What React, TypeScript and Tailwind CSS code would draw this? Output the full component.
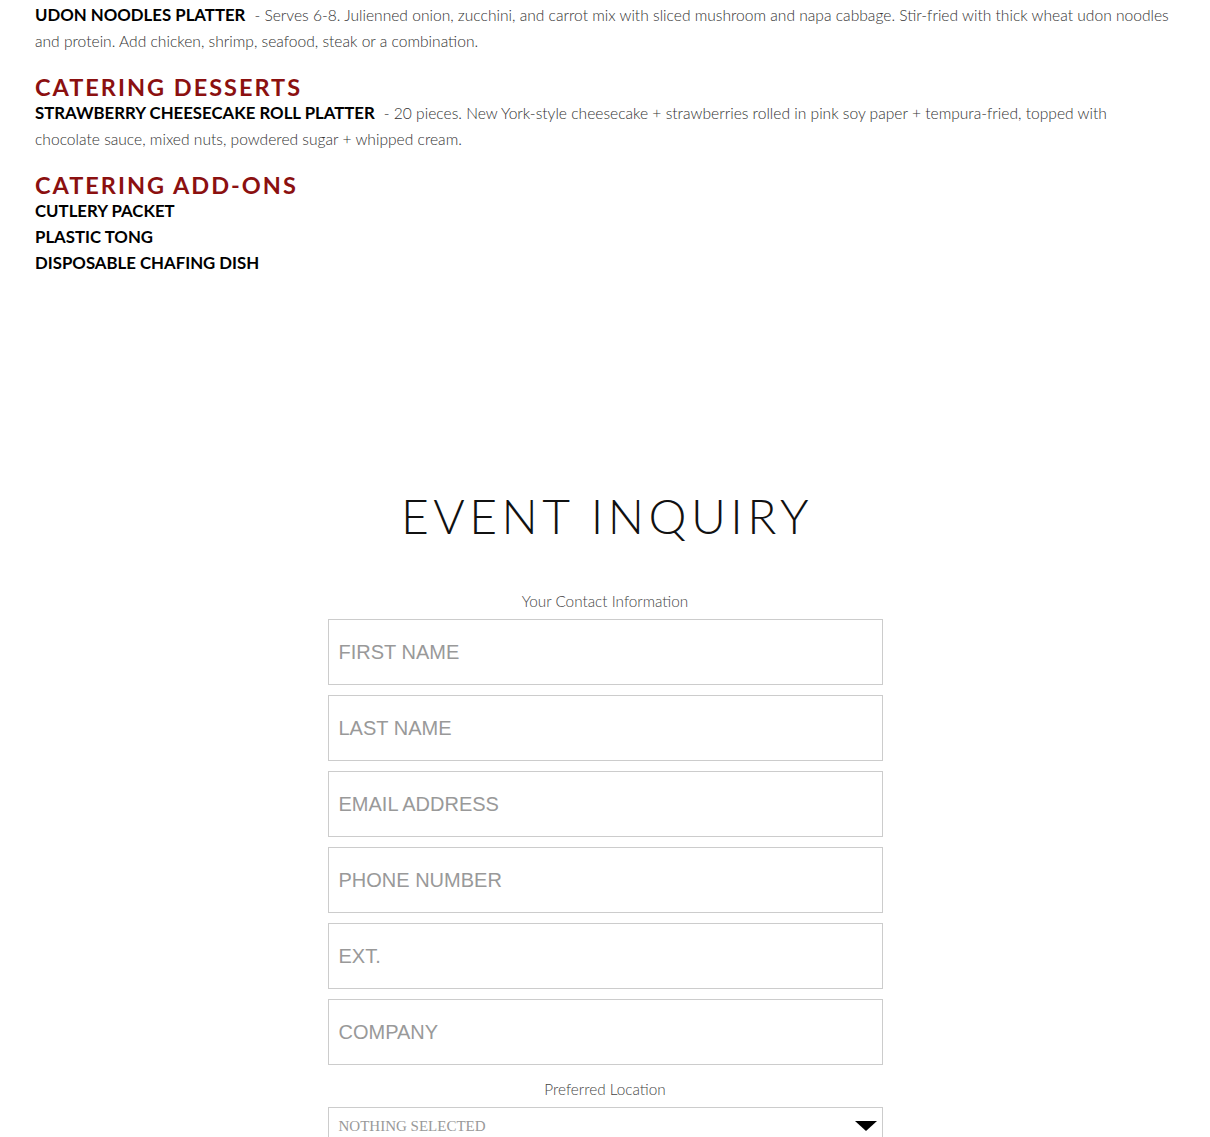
import React from "react";

const fields = ["FIRST NAME", "LAST NAME", "EMAIL ADDRESS", "PHONE NUMBER", "EXT.", "COMPANY"];

export default function App() {
  return (
    <div className="min-h-[1137px] bg-white text-black" style={{ fontFamily: "Lato, 'Noto Sans', sans-serif" }}>
      <div className="pl-[35px] pr-[38px] pt-[2px]">
        <p className="text-[15.6px] leading-[26px] text-[#333] font-light">
          <span className="font-bold text-black text-[16.8px]">UDON NOODLES PLATTER</span>
          <span className="ml-[9px]">- Serves 6-8. Julienned onion, zucchini, and carrot mix with sliced mushroom and napa cabbage. Stir-fried with thick wheat udon noodles and protein. Add chicken, shrimp, seafood, steak or a combination.</span>
        </p>
        <h2 className="mt-[20px] text-[23.5px] leading-[26px] font-bold tracking-[2px] text-[#8b1010]">CATERING DESSERTS</h2>
        <p className="text-[15.6px] leading-[26px] text-[#333] font-light">
          <span className="font-bold text-black text-[16.8px]">STRAWBERRY CHEESECAKE ROLL PLATTER</span>
          <span className="ml-[9px]">- 20 pieces. New York-style cheesecake + strawberries rolled in pink soy paper + tempura-fried, topped with chocolate sauce, mixed nuts, powdered sugar + whipped cream.</span>
        </p>
        <h2 className="mt-[20px] text-[23.5px] leading-[26px] font-bold tracking-[2px] text-[#8b1010]">CATERING ADD-ONS</h2>
        <div className="text-[16.8px] leading-[26px] font-bold">
          <div>CUTLERY PACKET</div>
          <div>PLASTIC TONG</div>
          <div>DISPOSABLE CHAFING DISH</div>
        </div>
      </div>

      <div className="mt-[212px] flex flex-col items-center">
        <h1 className="text-[48px] leading-[56px] font-light tracking-[4.5px] pl-[4px] text-[#111]">EVENT INQUIRY</h1>
        <div className="mt-[47px] text-[15.3px] leading-[20px] font-light text-[#444]">Your Contact Information</div>
        <div className="mt-[8px] w-[555px] flex flex-col gap-[10px]">
          {fields.map((f) => (
            <input
              key={f}
              placeholder={f}
              className="h-[66px] w-full border border-[#ccc] px-[10px] text-[20px] placeholder:text-[#999] outline-none"
              style={{ fontFamily: "'Liberation Sans', Arial, sans-serif" }}
            />
          ))}
        </div>
        <div className="mt-[14px] text-[15.3px] leading-[20px] font-light text-[#444]">Preferred Location</div>
        <div className="mt-[8px] w-[555px] h-[40px] border border-[#ccc] flex items-start justify-between pl-[10px] pr-[5px] pt-[8px]">
          <span className="text-[15px] leading-[20px] text-[#999]" style={{ fontFamily: "'Liberation Serif', 'Times New Roman', serif" }}>NOTHING SELECTED</span>
          <svg width="22" height="12" viewBox="0 0 22 12" className="mt-[5px]"><polygon points="0,0 22,0 11,10" fill="#000" /></svg>
        </div>
      </div>
    </div>
  );
}
